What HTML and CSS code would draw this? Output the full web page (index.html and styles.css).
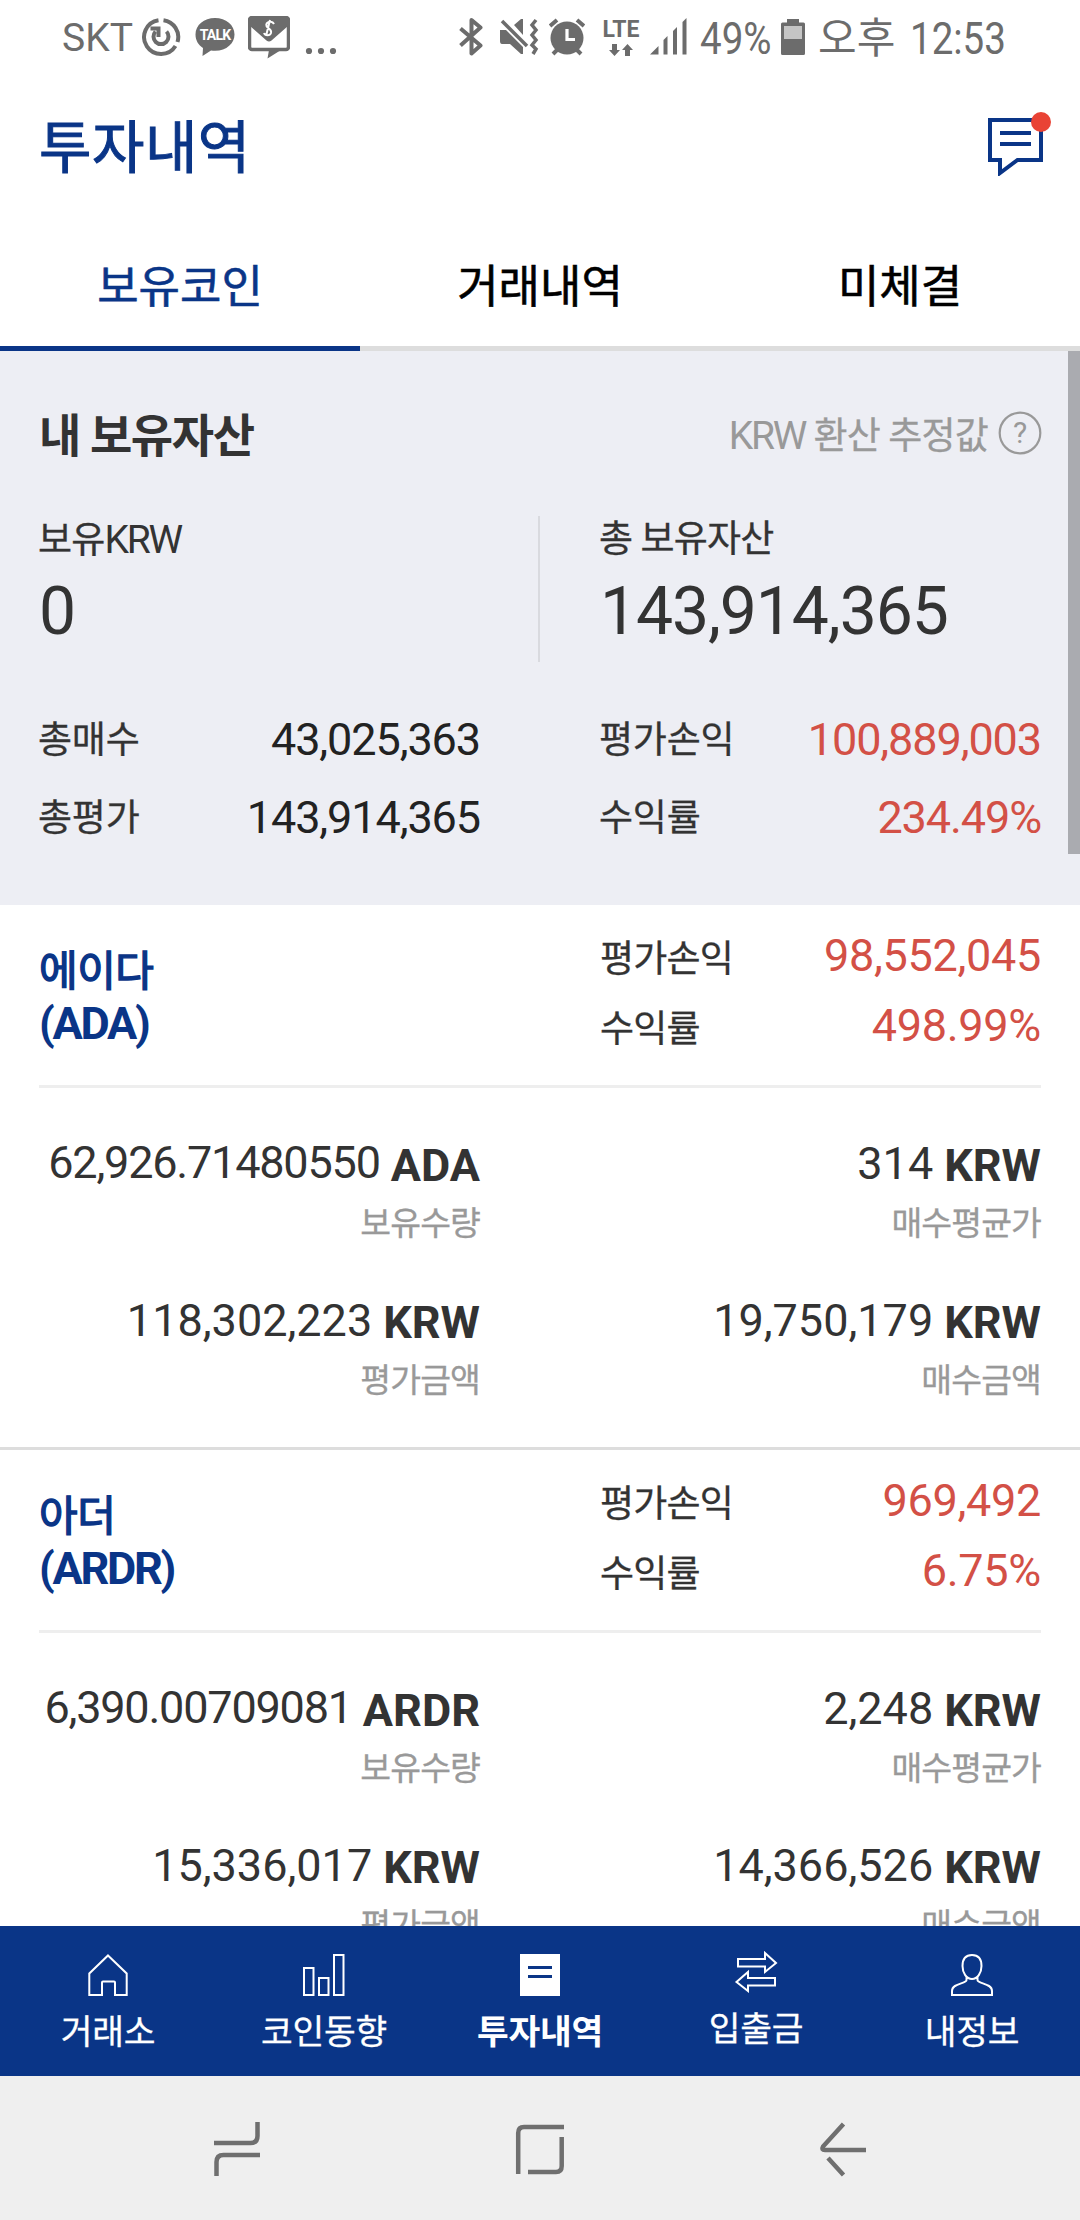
FILE: index.html
```html
<!DOCTYPE html>
<html lang="ko">
<head>
<meta charset="utf-8">
<title>투자내역</title>
<link rel="stylesheet" href="styles.css">
</head>
<body>
<div class="statusbar">
  <span class="carrier">SKT</span>
  <svg class="st-sync" width="40" height="40" viewBox="0 0 40 40" fill="none" stroke="#6c6c6c" stroke-width="4"><path d="M17.500 3.200A17 17 0 1 0 34.500 29"/><path d="M22.500 3.200A17 17 0 0 1 36.500 25"/><path d="M14.500 14.500A7.500 7.500 0 1 0 25.500 14.500"/><path d="M9.500 11.500H17.500V20"/></svg>
  <svg class="st-talk" width="42" height="40" viewBox="0 0 42 40"><path fill="#6c6c6c" d="M21 1C10 1 1.500 8 1.500 17.500C1.500 23.500 4.500 28 9 31L8.500 39L17 33.500C31 35.500 40.500 27 40.500 17.500C40.500 8 32 1 21 1Z"/><text x="21" y="23" text-anchor="middle" class="talk-text">TALK</text></svg>
  <svg class="st-mail" width="42" height="44" viewBox="0 0 42 44"><rect x="1.500" y="1.500" width="39" height="32" rx="2.500" fill="#fff" stroke="#6c6c6c" stroke-width="3.500"/><path fill="#6c6c6c" d="M2 2H40V10L23.500 24.500Q21 26.500 18.500 24.500L2 10ZM21 34H33L19.500 42.500Z"/><path d="M26 8C24 4 17 6 18.500 10C20 13 24 13 23 17C22 20 17 20 16 17M22 4L18 20" fill="none" stroke="#fff" stroke-width="2"/></svg>
  <svg class="st-dots" width="32" height="8" viewBox="0 0 32 8" fill="#6c6c6c"><circle cx="4" cy="4" r="3.100"/><circle cx="16" cy="4" r="3.100"/><circle cx="28" cy="4" r="3.100"/></svg>
  <svg class="st-bt" width="24" height="40" viewBox="0 0 24 40" fill="none" stroke="#6c6c6c" stroke-width="4" stroke-linejoin="round"><path d="M1.500 11.500L21.500 28.500L12.500 36.500V3L21.500 10.500L1.500 28.500"/></svg>
  <svg class="st-mute" width="40" height="38" viewBox="0 0 40 38"><path fill="#6c6c6c" d="M1 12H7L24 29V36H22L11 26H3Q1 26 1 23ZM15 7L22 1H24V17Z"/><path d="M3 3L28 28" stroke="#6c6c6c" stroke-width="3.500"/><path d="M37 2L33 7L37 12L33 17L37 22L33 27L37 31L34 36" fill="none" stroke="#6c6c6c" stroke-width="3.500"/></svg>
  <svg class="st-alarm" width="36" height="38" viewBox="0 0 36 38"><path d="M1 8L8 2M35 8L28 2M9 31L4 36M27 31L32 36" stroke="#6c6c6c" stroke-width="4"/><circle cx="18" cy="20" r="16.500" fill="#6c6c6c"/><path d="M18 11V21.500H26" fill="none" stroke="#fff" stroke-width="3.200"/></svg>
  <div class="lte"><span>LTE</span><svg width="24" height="12" viewBox="0 0 24 12" fill="#6c6c6c"><path d="M3 0H8V6H11L5.500 12L0 6H3ZM16 12H21V6H24L18.500 0L13 6H16Z"/></svg></div>
  <svg class="st-signal" width="37" height="37" viewBox="0 0 37 37" fill="#6c6c6c"><path d="M0 36.500L8.500 28V36.500ZM13.500 22L17.500 18V36.500H13.500ZM23 13L27 9V36.500H23ZM32.500 4L36.500 0V36.500H32.500Z"/></svg>
  <span class="clock percent">49%</span>
  <svg class="st-battery" width="24" height="36" viewBox="0 0 24 36"><path fill="#6c6c6c" d="M6 0H18V3.500H22.500Q24 3.500 24 5V34.500Q24 36 22.500 36H1.500Q0 36 0 34.500V5Q0 3.500 1.500 3.500H6Z"/><path fill="#c5c5c5" d="M3 7H21V20H3Z"/></svg>
  <span class="ampm">오후</span>
  <span class="clock">12:53</span>
</div>

<header class="header">
  <h1>투자내역</h1>
  <svg class="chat" width="66" height="66" viewBox="0 0 66 66"><path d="M5 10H56V50H32.500L15 63V50H5Z" fill="none" stroke="#0a3587" stroke-width="4"/><path d="M15 23H46M15 34H46" stroke="#0a3587" stroke-width="4"/><circle cx="56" cy="12" r="10" fill="#e94335"/></svg>
</header>

<nav class="tabs">
  <div class="tab on">보유코인</div>
  <div class="tab">거래내역</div>
  <div class="tab">미체결</div>
</nav>

<main class="scroll">
  <section class="summary">
    <div class="sum-title">
      <h2>내 보유자산</h2>
      <span class="hint"><span class="latin">KRW</span> 환산 추정값</span>
      <svg class="help" width="44" height="44" viewBox="0 0 44 44"><circle cx="22" cy="22" r="20.300" fill="none" stroke="#999" stroke-width="2.200"/><text x="22" y="32" text-anchor="middle" class="help-text">?</text></svg>
    </div>
    <div class="totals">
      <div class="total"><div class="lbl">보유<span class="latin">KRW</span></div><div class="big">0</div></div>
      <div class="total"><div class="lbl">총 보유자산</div><div class="big">143,914,365</div></div>
    </div>
    <div class="stats">
      <div class="stat"><span class="lbl">총매수</span><span class="num">43,025,363</span></div>
      <div class="stat"><span class="lbl">평가손익</span><span class="num up">100,889,003</span></div>
      <div class="stat"><span class="lbl">총평가</span><span class="num">143,914,365</span></div>
      <div class="stat"><span class="lbl">수익률</span><span class="num up">234.49%</span></div>
    </div>
  </section>

  <article class="coin">
    <div class="coin-head">
      <div class="name"><div class="ko">에이다</div><div>(ADA)</div></div>
      <div class="gain">
        <div class="gain-row"><span class="lbl">평가손익</span><span class="up">98,552,045</span></div>
        <div class="gain-row"><span class="lbl">수익률</span><span class="up">498.99%</span></div>
      </div>
    </div>
    <div class="coin-body">
      <div class="cell"><div class="amount"><span class="qty">62,926.71480550</span><b>ADA</b></div><div class="cap">보유수량</div></div>
      <div class="cell"><div class="amount"><span>314</span><b>KRW</b></div><div class="cap">매수평균가</div></div>
      <div class="cell"><div class="amount"><span>118,302,223</span><b>KRW</b></div><div class="cap">평가금액</div></div>
      <div class="cell"><div class="amount"><span>19,750,179</span><b>KRW</b></div><div class="cap">매수금액</div></div>
    </div>
  </article>

  <article class="coin">
    <div class="coin-head">
      <div class="name"><div class="ko">아더</div><div>(ARDR)</div></div>
      <div class="gain">
        <div class="gain-row"><span class="lbl">평가손익</span><span class="up">969,492</span></div>
        <div class="gain-row"><span class="lbl">수익률</span><span class="up">6.75%</span></div>
      </div>
    </div>
    <div class="coin-body">
      <div class="cell"><div class="amount"><span class="qty">6,390.00709081</span><b>ARDR</b></div><div class="cap">보유수량</div></div>
      <div class="cell"><div class="amount"><span>2,248</span><b>KRW</b></div><div class="cap">매수평균가</div></div>
      <div class="cell"><div class="amount"><span>15,336,017</span><b>KRW</b></div><div class="cap">평가금액</div></div>
      <div class="cell"><div class="amount"><span>14,366,526</span><b>KRW</b></div><div class="cap">매수금액</div></div>
    </div>
  </article>
  <div class="scrollbar"></div>
</main>

<nav class="bottom">
  <div class="item"><svg width="42" height="42" viewBox="0 0 42 42"><path d="M21 1.500L39.700 19.500V41H28V28.500Q28 27.500 27 27.500H16Q15 27.500 15 28.500V41H2.300V19.500Z"/></svg><span>거래소</span></div>
  <div class="item"><svg width="42" height="42" viewBox="0 0 42 42"><path d="M1 14H10.500V41H1ZM16 24H25.500V41H16ZM31 1H40.500V41H31Z"/></svg><span>코인동향</span></div>
  <div class="item on"><svg width="42" height="42" viewBox="0 0 42 42"><path class="solid" d="M1 0H41V42H1ZM9 12V15H33V12ZM9 21V24H33V21Z"/></svg><span>투자내역</span></div>
  <div class="item raised"><svg width="44" height="42" viewBox="0 0 44 42"><path d="M4 8H31V2L42 12L31 21V15.500H4ZM41 27H14V21L2.500 31L14 40V34.500H41Z"/></svg><span>입출금</span></div>
  <div class="item"><svg width="42" height="42" viewBox="0 0 42 42"><path d="M21 1C14 1 11.500 5 11.500 12C11.500 19 15.500 25 21 25C26.500 25 30.500 19 30.500 12C30.500 5 28 1 21 1ZM15.500 22V26C15.500 30 1 29 1 37V41H41V37C41 29 26.500 30 26.500 26V22"/></svg><span>내정보</span></div>
</nav>

<footer class="sysbar">
  <svg width="48" height="56" viewBox="0 0 48 56"><path d="M1 22H37.500Q44.500 22 44.500 15V1M47 34H10.500Q3.500 34 3.500 41V55"/></svg>
  <svg width="50" height="52" viewBox="0 0 50 52"><path d="M3.200 51V10Q3.200 4 9 4H49M46.700 14V43Q46.700 49 41 49H13"/></svg>
  <svg width="48" height="56" viewBox="0 0 48 56"><path d="M24.500 3L4 25.500Q2 29 6 29H47M9 37L24.500 54"/></svg>
</footer>
</body>
</html>
```
FILE: styles.css
```css
* { box-sizing: border-box; }
body {
  margin: 0;
  width: 1080px;
  height: 2220px;
  overflow: hidden;
  background: #fff;
  color: #333;
  font-family: Roboto, "Noto Sans CJK KR", sans-serif;
  font-weight: 400;
}
h1, h2 { margin: 0; }
svg { display: block; flex: none; }

/* status bar */
.statusbar {
  height: 72px;
  display: flex;
  align-items: flex-start;
  color: #6c6c6c;
  white-space: nowrap;
}
.carrier { width: 71px; margin: 12px 0 0 62px; font-size: 39px; line-height: 52px; letter-spacing: 0; }
.st-sync { margin: 17px 0 0 8px; }
.st-talk { margin: 17px 0 0 13px; }
.talk-text { font: 700 14px Roboto, sans-serif; fill: #fff; letter-spacing: -0.8px; }
.st-mail { margin: 16px 0 0 12px; }
.st-dots { margin: 47px 0 0 15px; }
.st-bt { margin: 17px 0 0 122px; }
.st-mute { margin: 18px 0 0 16px; }
.st-alarm { margin: 18px 0 0 10px; }
.lte { width: 40px; margin: 16px 0 0 16px; display: flex; flex-direction: column; align-items: center; font-size: 23px; font-weight: 700; line-height: 28px; }
.st-signal { margin: 18px 0 0 9px; }
.clock { margin: 12px 0 0 14px; font-size: 44px; line-height: 54px; transform: scaleX(0.875); transform-origin: 0 50%; }
.percent { width: 70px; margin-left: 13px; }
.st-battery { margin: 19px 0 0 11px; }
.ampm { width: 78px; margin: 12px 0 0 13px; font-size: 42px; line-height: 54px; }

/* title */
.header {
  height: 146px;
  display: flex;
  justify-content: space-between;
  align-items: flex-start;
  padding: 37px 29px 0 39px;
  color: #0a3587;
}
h1 { font-size: 57px; line-height: 80px; font-weight: 400; letter-spacing: 0.5px; -webkit-text-stroke: 1px; }
.chat { margin-top: 1px; }

/* tabs */
.tabs { height: 133px; display: flex; color: #000; }
.tab {
  flex: 1;
  padding-top: 40px;
  border-bottom: 5px solid #ddd;
  text-align: center;
  font-size: 45px;
  line-height: 60px;
  -webkit-text-stroke: 0.6px;
}
.tab.on { color: #0a3587; border-color: #0a3587; }

/* scrolling list */
.scroll { position: relative; height: 1575px; overflow: hidden; }
.scrollbar { position: absolute; top: 0; right: 0; width: 12px; height: 503px; background: #aaabb0; }
.lbl { font-size: 37px; letter-spacing: -0.8px; -webkit-text-stroke: 0.3px; }
.latin { font-size: 39px; letter-spacing: -2.3px; -webkit-text-stroke: 0; }
.up { color: #d35046; }

.summary { height: 554px; padding: 55px 39px 0; background: #edeef4; }
.sum-title { display: flex; height: 60px; line-height: 60px; }
h2 { flex: 1; font-size: 46px; font-weight: 700; letter-spacing: -1.4px; }
.hint { font-size: 37px; letter-spacing: -0.8px; color: #999; -webkit-text-stroke: 0.3px; }
.help { margin: 5px -1px 0 10px; }
.help-text { font: 400 30px Roboto, sans-serif; fill: #999; }
.totals { height: 146px; margin-top: 50px; display: grid; grid-template-columns: 501px 1fr; }
.total:first-child { border-right: 2px solid #d9dadf; }
.total + .total { padding-left: 60px; }
.totals .lbl { height: 50px; margin: -1px 0 0 -1px; line-height: 50px; }
.big { margin-top: 7px; font-size: 66px; line-height: 80px; letter-spacing: -1.1px; }
.stats { margin-top: 39px; display: grid; grid-template-columns: 441px 441px; column-gap: 120px; }
.stat { height: 78px; line-height: 78px; display: flex; justify-content: space-between; }
.stat .lbl { margin-left: -1px; padding-top: 1px; letter-spacing: -0.2px; }
.num { font-size: 45px; letter-spacing: -1.1px; }
.num:not(.up) { color: #222; }

.coin { height: 545px; border-bottom: 3px solid #ddd; padding: 0 39px; }
.coin-head { height: 183px; border-bottom: 3px solid #eee; display: flex; justify-content: space-between; }
.name { padding-top: 39px; font-size: 45px; line-height: 53px; font-weight: 700; letter-spacing: -0.05em; color: #0a3587; }
.name .ko { height: 53px; padding-top: 1px; font-size: 42px; font-weight: 400; letter-spacing: -0.5px; -webkit-text-stroke: 1.4px; }
.gain { width: 441px; padding-top: 16px; }
.gain-row { height: 70px; line-height: 70px; display: flex; justify-content: space-between; font-size: 45px; letter-spacing: -0.3px; }
.gain-row .lbl { padding-top: 4px; }
.coin-body { padding-top: 48px; display: grid; grid-template-columns: 441px 441px; column-gap: 120px; row-gap: 47px; }
.cell { height: 110px; text-align: right; }
.amount { height: 60px; line-height: 60px; font-size: 45px; display: flex; justify-content: flex-end; gap: 11px; }
.amount span { margin-top: -2px; }
.amount .qty { margin-top: -3px; letter-spacing: -1.2px; }
.cap { margin-top: 6px; font-size: 33.5px; line-height: 44px; letter-spacing: -0.9px; color: #999; -webkit-text-stroke: 0.3px; }

/* app navigation */
.bottom { height: 150px; display: flex; background: #0a3587; color: #fff; }
.item { flex: 1; padding-top: 28px; display: flex; flex-direction: column; align-items: center; gap: 14px; font-size: 34.5px; line-height: 44px; letter-spacing: -0.2px; }
.item span { -webkit-text-stroke: 0.3px; }
.item.on { font-weight: 700; }
.item.on span { -webkit-text-stroke: 0; }
.item.raised { padding-top: 25px; }
.item path { fill: none; stroke: #fff; stroke-width: 2; }
.item .solid { fill: #fff; stroke: none; fill-rule: evenodd; }

/* system navigation */
.sysbar { height: 144px; padding: 2px 213px 0; display: flex; justify-content: space-between; align-items: center; background: #efefef; }
.sysbar path { fill: none; stroke: #6f6f6f; stroke-width: 4.500; }
```
